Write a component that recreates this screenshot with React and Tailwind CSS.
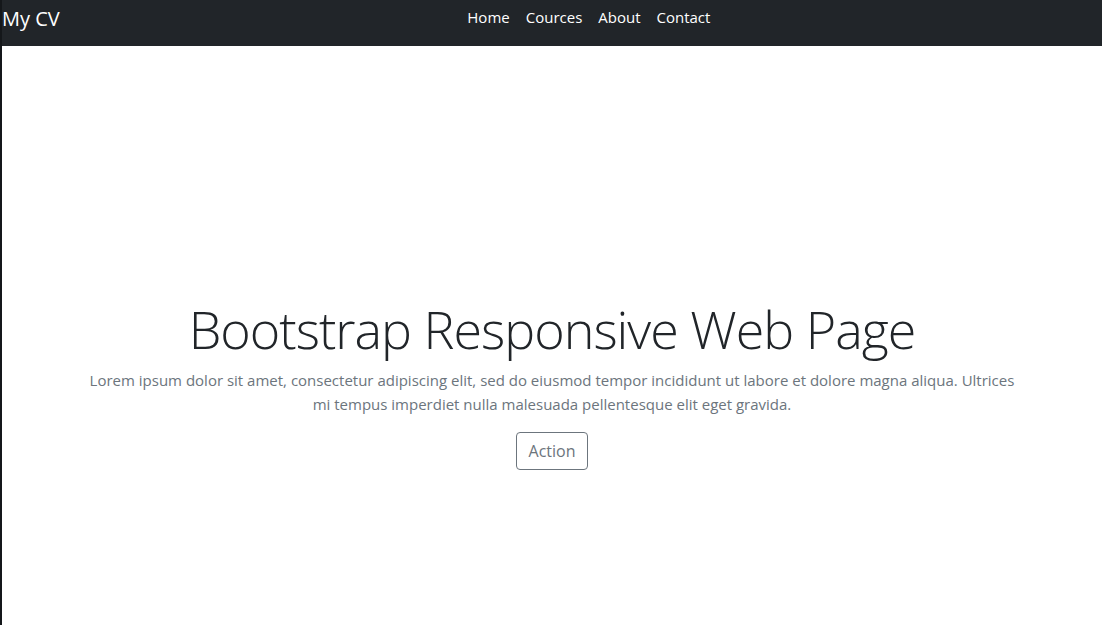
import React from 'react';

const links = ['Home', 'Cources', 'About', 'Contact'];

const App = () => {
    return (
        <div
            className="min-h-[625px] bg-white border-l-2 border-[#14171a]"
            style={{ fontFamily: '"Open Sans", "Noto Sans", sans-serif' }}
        >
            {/* NAVBAR */}
            <header className="flex items-center h-[46px] pb-2 bg-[#212529]">
                <a className="text-[20px] leading-[30px] text-white mr-4">My CV</a>
                <ul className="flex items-center mx-auto mb-1">
                    {links.map((l) => (
                        <li key={l}>
                            <a className="block px-2 text-[15px] leading-6 text-white">{l}</a>
                        </li>
                    ))}
                </ul>
            </header>

            {/* HERO */}
            <section className="pt-[252px]">
                <div className="w-[960px] mx-auto px-[15px] text-center">
                    <h1 className="text-[52px] leading-[1.2] font-light tracking-[-1px] text-[#212529] mb-2">
                        Bootstrap Responsive Web Page
                    </h1>
                    <p className="text-[15px] leading-6 text-[#6c757d] mb-4">
                        Lorem ipsum dolor sit amet, consectetur adipiscing elit, sed do eiusmod tempor incididunt ut labore et dolore magna aliqua. Ultrices mi tempus imperdiet nulla malesuada pellentesque elit eget gravida.
                    </p>
                    <button className="px-3 py-1.5 text-[16px] leading-6 text-[#6c757d] border border-[#6c757d] rounded">
                        Action
                    </button>
                </div>
            </section>
        </div>
    );
};

export default App;
